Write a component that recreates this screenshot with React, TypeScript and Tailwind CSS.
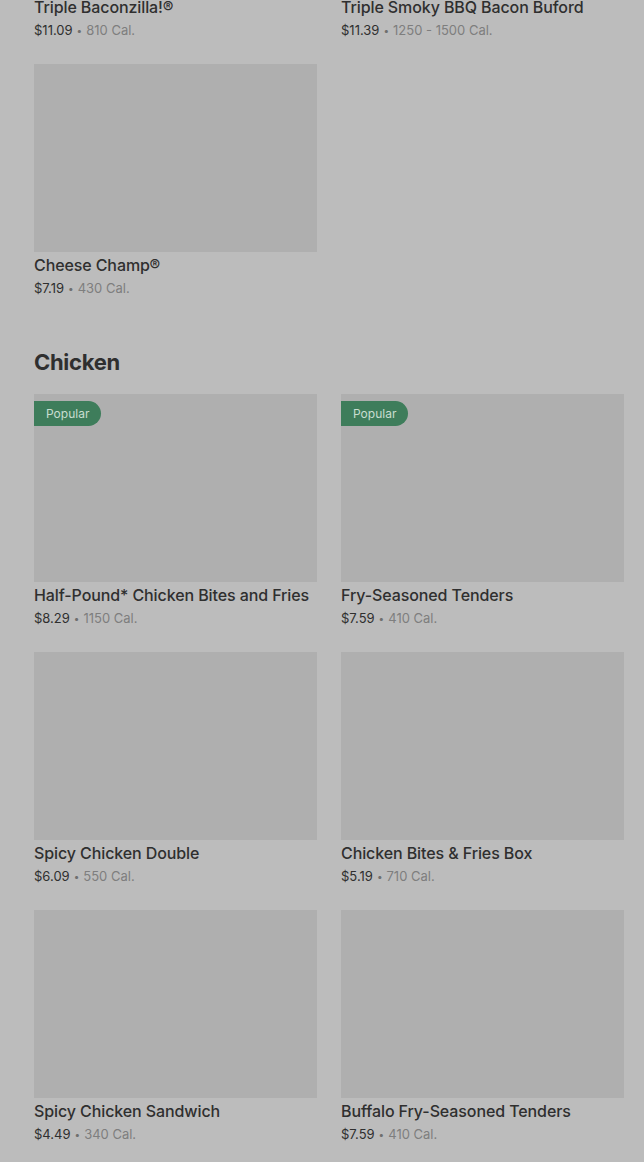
import React from "react";

type Item = { name: string; price: string; cal: string; popular?: boolean };

const top: Item[] = [
  { name: "Triple Baconzilla!®", price: "$11.09", cal: "810 Cal." },
  { name: "Triple Smoky BBQ Bacon Buford", price: "$11.39", cal: "1250 - 1500 Cal." },
  { name: "Cheese Champ®", price: "$7.19", cal: "430 Cal." },
];

const chicken: Item[] = [
  { name: "Half-Pound* Chicken Bites and Fries", price: "$8.29", cal: "1150 Cal.", popular: true },
  { name: "Fry-Seasoned Tenders", price: "$7.59", cal: "410 Cal.", popular: true },
  { name: "Spicy Chicken Double", price: "$6.09", cal: "550 Cal." },
  { name: "Chicken Bites & Fries Box", price: "$5.19", cal: "710 Cal." },
  { name: "Spicy Chicken Sandwich", price: "$4.49", cal: "340 Cal." },
  { name: "Buffalo Fry-Seasoned Tenders", price: "$7.59", cal: "410 Cal." },
];

function Card({ item }: { item: Item }) {
  return (
    <div className="flex flex-col">
      <div className="relative h-[188px] bg-[#afafaf]">
        {item.popular && (
          <div className="absolute left-0 top-[7px] h-[25px] px-[12px] flex items-center rounded-r-full bg-[#3e7d5b] text-[#c9ddd0] text-[12px]">
            Popular
          </div>
        )}
      </div>
      <div className="mt-[2px] leading-[22px] text-[16px] font-medium tracking-[-0.1px] text-[#2f2f2f] whitespace-nowrap">
        {item.name}
      </div>
      <div className="mt-[2px] leading-[20px] text-[13px] whitespace-nowrap flex items-center">
        <span className="text-[#2f2f2f]">{item.price}</span>
        <span className="mx-[4px] text-[#6f6f6f] text-[10px]">•</span>
        <span className="text-[#7e7e7e]">{item.cal}</span>
      </div>
    </div>
  );
}

export default function App() {
  return (
    <div
      className="w-[644px] h-[1162px] overflow-hidden bg-[#bcbcbc]"
      style={{ fontFamily: "Inter, 'Noto Sans', sans-serif" }}
    >
      <div className="mt-[-194px] pl-[34px] pr-[20px]">
        <div className="grid grid-cols-2 gap-x-[24px] gap-y-[24px]">
          {top.map((it) => (
            <Card key={it.name} item={it} />
          ))}
        </div>
        <h2 className="mt-[48px] mb-[16px] text-[22px] leading-[32px] font-bold tracking-[-0.3px] text-[#2f2f2f]">
          Chicken
        </h2>
        <div className="grid grid-cols-2 gap-x-[24px] gap-y-[24px]">
          {chicken.map((it) => (
            <Card key={it.name} item={it} />
          ))}
        </div>
      </div>
    </div>
  );
}
